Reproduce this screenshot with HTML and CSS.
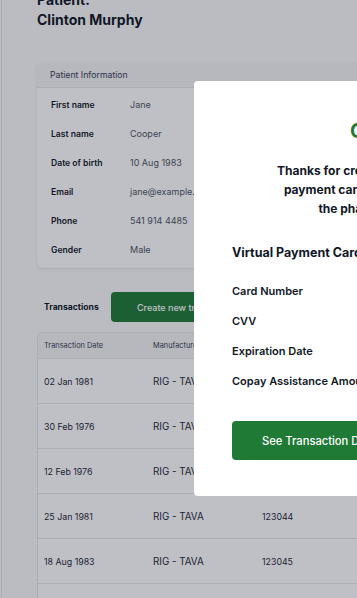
FILE: index.html
```html
<!DOCTYPE html>
<html lang="en">
<head>
  <meta charset="UTF-8">
  <title>Patient - Clinton Murphy</title>
  <link rel="stylesheet" href="styles.css">
</head>
<body>
<div class="page">
  <h1 class="patient-title">Patient:<br>Clinton Murphy</h1>

  <section class="info-card">
    <div class="info-head">Patient Information</div>
    <div class="info-list">
      <div class="info-row"><span class="info-label">First name</span><span class="info-value">Jane</span></div>
      <div class="info-row"><span class="info-label">Last name</span><span class="info-value">Cooper</span></div>
      <div class="info-row"><span class="info-label">Date of birth</span><span class="info-value">10 Aug 1983</span></div>
      <div class="info-row"><span class="info-label">Email</span><span class="info-value">jane@example.com</span></div>
      <div class="info-row"><span class="info-label">Phone</span><span class="info-value">541 914 4485</span></div>
      <div class="info-row"><span class="info-label">Gender</span><span class="info-value">Male</span></div>
    </div>
  </section>

  <div class="tx-bar">
    <h3>Transactions</h3>
    <button class="btn btn-new">Create new transaction</button>
  </div>

  <table class="tx-table">
    <thead>
      <tr><th>Transaction Date</th><th>Manufacturer</th><th>Claim ID</th></tr>
    </thead>
    <tbody>
      <tr><td>02 Jan 1981</td><td class="maker">RIG - TAVA</td><td>123041</td></tr>
      <tr><td>30 Feb 1976</td><td class="maker">RIG - TAVA</td><td>123042</td></tr>
      <tr><td>12 Feb 1976</td><td class="maker">RIG - TAVA</td><td>123043</td></tr>
      <tr><td>25 Jan 1981</td><td class="maker">RIG - TAVA</td><td>123044</td></tr>
      <tr><td>18 Aug 1983</td><td class="maker">RIG - TAVA</td><td>123045</td></tr>
      <tr><td>04 Mar 1985</td><td class="maker">RIG - TAVA</td><td>123046</td></tr>
    </tbody>
  </table>
</div>

<div class="overlay"></div>

<div class="modal">
  <h2 class="modal-title">Congratulations!</h2>
  <p class="modal-text">Thanks for creating the new virtual copay assistance<br>payment card. Please use the card details below at<br>the pharmacy to process the full claim.</p>

  <h4 class="card-title">Virtual Payment Card Details</h4>
  <div class="card-list">
    <div class="card-row">Card Number</div>
    <div class="card-row">CVV</div>
    <div class="card-row">Expiration Date</div>
    <div class="card-row">Copay Assistance Amount</div>
  </div>

  <button class="btn btn-details">See Transaction Details</button>
</div>
</body>
</html>
```

FILE: styles.css
```css
* { box-sizing: border-box; }
body {
  font-family: 'Inter', 'Noto Sans', sans-serif;
  background-color: #f9fafb;
  margin: 0;
  padding: 0;
  width: 357px;
  height: 598px;
  overflow: hidden;
  position: relative;
}
.page {
  margin-left: 1px;
  border-left: 1px solid #e5e7eb;
  padding: 0 0 0 35px;
  width: 700px;
}
.patient-title {
  margin: -10px 0 32px;
  font-size: 14px;
  line-height: 20px;
  font-weight: 700;
  color: #111827;
}

/* patient info card */
.info-card {
  width: 480px;
  background-color: white;
  border-radius: 6px;
  box-shadow: 0 1px 3px rgba(0, 0, 0, 0.1);
  overflow: hidden;
}
.info-head {
  height: 26px;
  line-height: 26px;
  padding-left: 13px;
  font-size: 8.7px;
  color: #374151;
  background-color: #f3f4f6;
  border-bottom: 1px solid #e5e7eb;
}
.info-list {
  padding: 2px 0 4px;
}
.info-row {
  display: flex;
  height: 29px;
  align-items: center;
  padding-left: 14px;
  font-size: 8.6px;
}
.info-label {
  width: 79px;
  font-weight: 600;
  color: #111827;
}
.info-value {
  font-size: 9px;
  color: #4b5563;
}

/* transactions */
.tx-bar {
  display: flex;
  align-items: center;
  margin-top: 24px;
  padding-left: 7px;
}
.tx-bar h3 {
  width: 67px;
  margin: 0;
  font-size: 8.6px;
  font-weight: 700;
  color: #111827;
}
.btn {
  border: none;
  border-radius: 4px;
  background-color: #1f7a36;
  color: white;
  font-family: inherit;
  cursor: pointer;
  text-align: left;
}
.btn-new {
  height: 30px;
  width: 170px;
  padding: 0 0 0 26px;
  font-size: 9px;
  font-weight: 500;
}
.tx-table {
  margin-top: 10px;
  width: 480px;
  table-layout: fixed;
  border-collapse: separate;
  border-spacing: 0;
  background-color: white;
  border: 1px solid #e5e7eb;
  border-radius: 6px 6px 0 0;
  overflow: hidden;
}
.tx-table th,
.tx-table td {
  width: 109px;
  padding: 0 0 0 6px;
  text-align: left;
  border-bottom: 1px solid #e5e7eb;
}
.tx-table th {
  height: 26px;
  font-size: 7.4px;
  font-weight: 400;
  color: #374151;
  background-color: #f3f4f6;
}
.tx-table td {
  height: 45px;
  font-size: 8.8px;
  color: #1f2937;
}
.tx-table th:last-child,
.tx-table td:last-child { width: auto; }
.tx-table td.maker {
  font-size: 9.8px;
}

.overlay {
  position: fixed;
  inset: 0;
  background-color: rgba(17, 24, 39, 0.27);
}

/* modal */
.modal {
  position: absolute;
  left: 194px;
  top: 81px;
  width: 476px;
  height: 415px;
  padding: 37px 38px;
  background-color: white;
  border-radius: 4px;
}
.modal-title {
  margin: 0;
  text-align: center;
  font-size: 20px;
  line-height: 26px;
  font-weight: 700;
  color: #1f7a36;
}
.modal-text {
  margin: 17px 0 0;
  text-align: center;
  font-size: 12px;
  line-height: 19px;
  font-weight: 700;
  color: #111827;
}
.card-title {
  margin: 25px 0 0;
  font-size: 12.5px;
  line-height: 20px;
  font-weight: 700;
  color: #111827;
}
.card-list {
  margin-top: 13px;
}
.card-row {
  height: 30px;
  line-height: 30px;
  font-size: 11px;
  font-weight: 600;
  color: #111827;
}
.btn-details {
  margin-top: 25px;
  width: 100%;
  height: 39px;
  padding: 0 0 0 30px;
  font-size: 11.2px;
  font-weight: 500;
}
```
